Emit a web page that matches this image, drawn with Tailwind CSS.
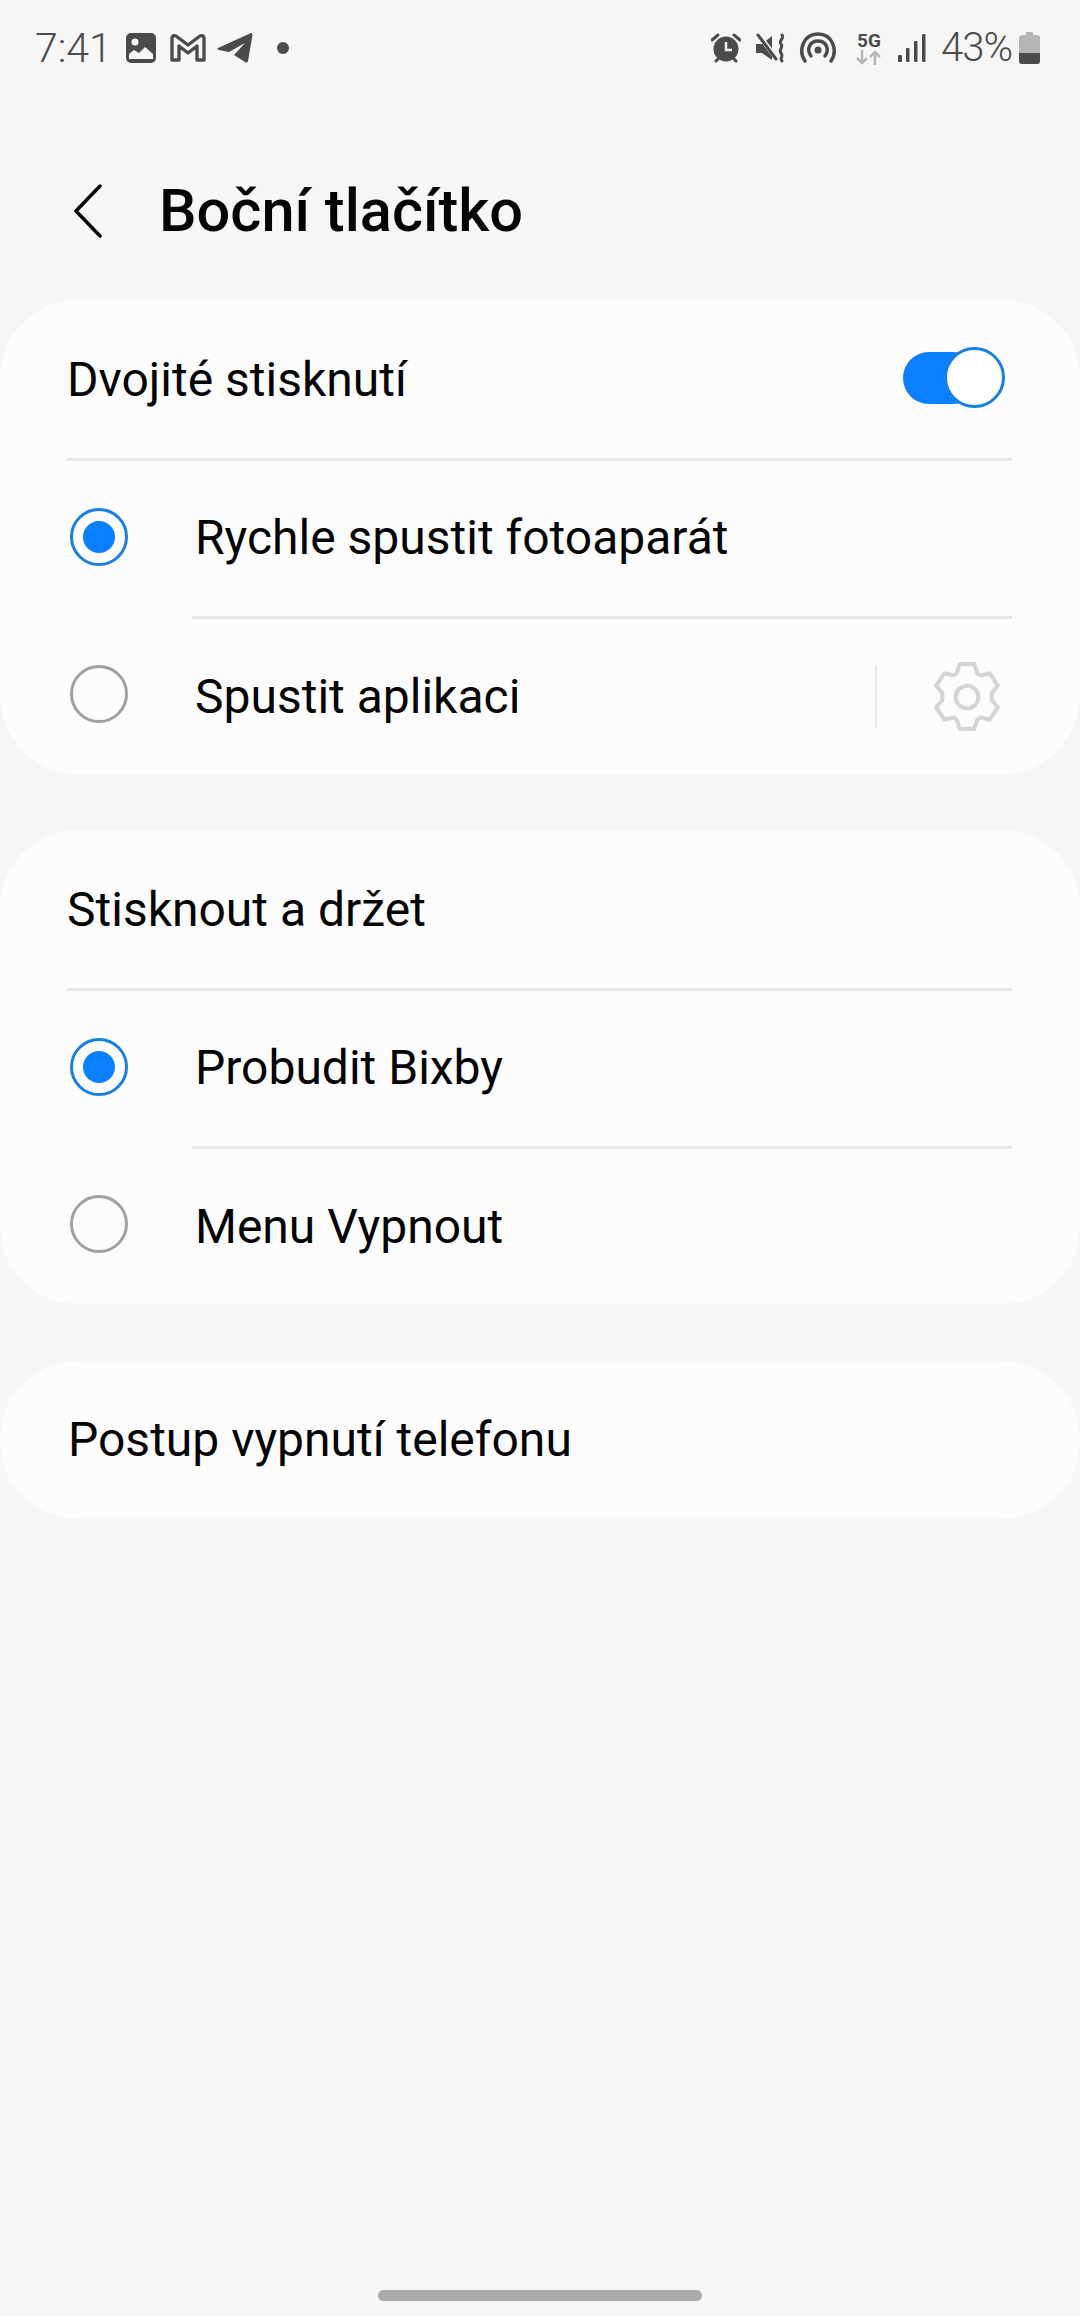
<!DOCTYPE html>
<html lang="en">
<head>
    <meta charset="UTF-8">
    <meta name="viewport" content="width=device-width, initial-scale=1.0">
    <title>Boční tlačítko</title>
    <script src="https://cdn.jsdelivr.net/npm/@tailwindcss/browser@4"></script>
</head>
<body class="bg-[#f6f6f6] text-[#050505] font-['Roboto',sans-serif]">
<div class="w-[1080px] h-[2316px] flex flex-col overflow-hidden">

    <!-- Status bar -->
    <div class="h-[96px] pl-[35px] pr-[40px] flex items-center justify-between text-[#4b4b4b]">
        <div class="flex items-center">
            <span class="text-[41px] font-light leading-none w-[90px]">7:41</span>
            <svg class="w-[32px] h-[32px]" viewBox="0 0 32 32"><rect x="1" y="1" width="30" height="30" rx="5" fill="#4b4b4b"/><circle cx="10" cy="10" r="3.5" fill="#f6f6f6"/><path d="M4 27v-5l5-4 5 3 6-6 8 7v5z" fill="#f6f6f6"/></svg>
            <svg class="w-[36px] h-[30px] ml-[13px]" viewBox="0 0 36 30" fill="none" stroke="#4b4b4b" stroke-width="3.4" stroke-linejoin="round"><path d="M2 5c0-2 2-3 4-2l12 9 12-9c2-1 4 0 4 2v22h-7V13l-9 7-9-7v14H2z"/></svg>
            <svg class="w-[36px] h-[32px] ml-[11px]" viewBox="0 0 36 32"><path d="M1 16 34 1c1 0 2 1 1.500 2L31 29c-.5 2-2 2-3 1l-11-7 11-12-16 9-10-2c-2-.5-2-1.500-1-2z" fill="#4b4b4b"/></svg>
            <span class="w-[12px] h-[12px] rounded-full bg-[#4b4b4b] ml-[24px]"></span>
        </div>
        <div class="flex items-center">
            <svg class="w-[30px] h-[30px]" viewBox="0 0 30 30"><circle cx="15" cy="16" r="12.500" fill="#4b4b4b"/><path d="M15 9v8h6" fill="none" stroke="#f6f6f6" stroke-width="2.500"/><path d="M1 7l6-5M29 7l-6-5M5 28l3-3M25 28l-3-3" stroke="#4b4b4b" stroke-width="3" stroke-linecap="round"/></svg>
            <svg class="w-[30px] h-[30px] ml-[15px]" viewBox="0 0 30 30" fill="none"><path d="M0 11h6l10-8v24L6 20H0z" fill="#4b4b4b"/><path d="M2 1l19 25" stroke="#f6f6f6" stroke-width="5"/><path d="M2 2l18 24" stroke="#4b4b4b" stroke-width="3" stroke-linecap="round"/><path d="M26 2c3 4-4 5-1 9s-3 5 0 9-2 5 1 8" stroke="#4b4b4b" stroke-width="3" stroke-linecap="round"/></svg>
            <svg class="w-[38px] h-[32px] ml-[13px]" viewBox="0 0 38 32" fill="none" stroke="#4b4b4b" stroke-width="3.500" stroke-linecap="round"><path d="M6 29C-1 19 4 2 19 2s20 17 13 27"/><path d="M12 24c-5-7-1-15 7-15s12 8 7 15"/><circle cx="19" cy="18" r="3.500" fill="#4b4b4b" stroke="none"/></svg>
            <div class="ml-[19px] w-[26px] h-[33px] flex flex-col items-center">
                <span class="text-[19px] font-bold leading-[17px]">5G</span>
                <svg class="w-[26px] h-[15px] mt-[1px]" viewBox="0 0 26 15" fill="none" stroke="#b5b5b5" stroke-width="2.500"><path d="M6 0v13M1 8l5 5 5-5M19 15V2M14 7l5-5 5 5"/></svg>
            </div>
            <svg class="w-[28px] h-[30px] ml-[16px]" viewBox="0 0 28 30" fill="#4b4b4b"><rect x="0" y="22" width="4" height="7" rx="1"/><rect x="8" y="15" width="3.500" height="14" rx="1"/><rect x="16" y="8" width="3.500" height="21" rx="1"/><rect x="24" y="1" width="3.500" height="28" rx="1"/></svg>
            <span class="text-[40px] font-light tracking-[-1px] leading-none ml-[15px] w-[70px] whitespace-nowrap">43%</span>
            <svg class="w-[21px] h-[32px] ml-[8px]" viewBox="0 0 21 32"><path d="M7 0h7v3h4a3 3 0 0 1 3 3v23a3 3 0 0 1-3 3H3a3 3 0 0 1-3-3V6a3 3 0 0 1 3-3h4z" fill="#b5b5b5"/><path d="M0 21h21v8a3 3 0 0 1-3 3H3a3 3 0 0 1-3-3z" fill="#4b4b4b"/></svg>
        </div>
    </div>

    <!-- Title -->
    <div class="h-[204px] pl-[74px] pt-[26px] flex items-center">
        <svg class="w-[28px] h-[54px]" viewBox="0 0 28 54" fill="none" stroke="#050505" stroke-width="3.500" stroke-linecap="round" stroke-linejoin="round"><path d="M26 2 2 27l24 25"/></svg>
        <h1 class="text-[59.500px] font-medium ml-[57px] mt-[2px] leading-none">Boční tlačítko</h1>
    </div>

    <!-- Double press -->
    <div class="bg-[#fcfcfc] rounded-[78px] h-[474px] flex flex-col text-[48px]">
        <div class="h-[161px] ml-[67px] mr-[68px] border-b-[3px] border-[#e6e6e6] flex items-center justify-between">
            <span class="mt-[2px]">Dvojité stisknutí</span>
            <div class="relative w-[102px] h-[61px] mr-[7px] mb-[3px] flex items-center">
                <div class="w-[76px] h-[52px] rounded-full bg-[#0a7fff]"></div>
                <div class="absolute right-0 top-0 w-[61px] h-[61px] rounded-full bg-white border-[3px] border-[#1a7fe0]"></div>
            </div>
        </div>
        <div class="h-[158px] flex items-center pl-[70px]">
            <span class="w-[58px] h-[58px] mb-[6px] rounded-full border-[3px] border-[#1a7fe0] flex items-center justify-center"><span class="w-[32px] h-[32px] rounded-full bg-[#0a7fff]"></span></span>
            <span class="h-full flex-1 ml-[64px] pl-[3px] pb-[1px] mr-[68px] border-b-[3px] border-[#e6e6e6] flex items-center">Rychle spustit fotoaparát</span>
        </div>
        <div class="h-[155px] flex items-center pl-[70px]">
            <span class="w-[58px] h-[58px] mb-[5px] rounded-full border-[3px] border-[#a0a0a0]"></span>
            <span class="flex-1 ml-[67px]">Spustit aplikaci</span>
            <span class="w-[2px] h-[62px] bg-[#e6e6e6]"></span>
            <svg class="w-[70px] h-[72px] ml-[55px] mr-[78px]" viewBox="0 0 68 70" fill="none" stroke="#d4d4d4" stroke-width="4" stroke-linejoin="round"><path d="M27 3h14l3 9 3 2 9-2 8 12-6 7v7l6 7-8 12-9-2-3 2-3 9H27l-3-9-3-2-9 2-8-12 6-7v-7l-6-7 8-12 9 2 3-2z"/><circle cx="34" cy="35" r="11"/></svg>
        </div>
    </div>

    <!-- Press and hold -->
    <div class="bg-[#fcfcfc] rounded-[78px] h-[474px] mt-[56px] flex flex-col text-[48px]">
        <div class="h-[161px] ml-[67px] mr-[68px] border-b-[3px] border-[#e6e6e6] flex items-center">
            <span class="mt-[2px]">Stisknout a držet</span>
        </div>
        <div class="h-[158px] flex items-center pl-[70px]">
            <span class="w-[58px] h-[58px] mb-[6px] rounded-full border-[3px] border-[#1a7fe0] flex items-center justify-center"><span class="w-[32px] h-[32px] rounded-full bg-[#0a7fff]"></span></span>
            <span class="h-full flex-1 ml-[64px] pl-[3px] pb-[1px] mr-[68px] border-b-[3px] border-[#e6e6e6] flex items-center">Probudit Bixby</span>
        </div>
        <div class="h-[155px] flex items-center pl-[70px]">
            <span class="w-[58px] h-[58px] mb-[5px] rounded-full border-[3px] border-[#a0a0a0]"></span>
            <span class="flex-1 ml-[67px]">Menu Vypnout</span>
        </div>
    </div>

    <!-- Power off steps -->
    <div class="bg-[#fcfcfc] rounded-[78px] h-[158px] mt-[57px] pl-[68px] flex items-center text-[48px]">
        <span>Postup vypnutí telefonu</span>
    </div>

    <div class="mt-auto mb-[15px] mx-auto w-[324px] h-[11px] rounded-full bg-[#a9a9a9]"></div>
</div>
</body>
</html>
